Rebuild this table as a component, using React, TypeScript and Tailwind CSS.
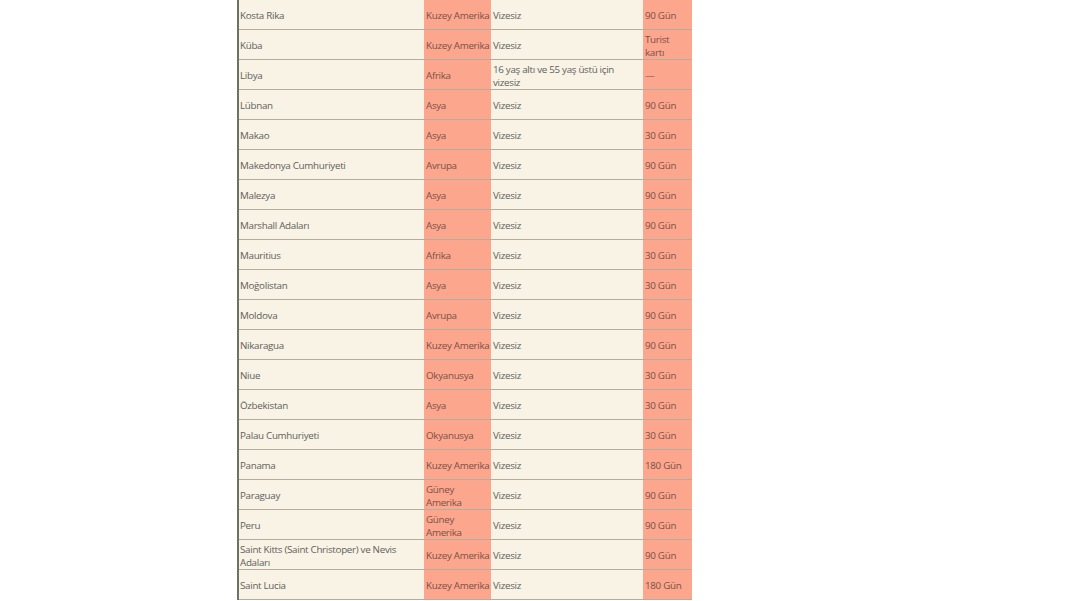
import React from "react";

type Row = [string, string, string, string];

const rows: Row[] = [
  ["Kosta Rika", "Kuzey Amerika", "Vizesiz", "90 Gün"],
  ["Küba", "Kuzey Amerika", "Vizesiz", "Turist kartı"],
  ["Libya", "Afrika", "16 yaş altı ve 55 yaş üstü için vizesiz", "—"],
  ["Lübnan", "Asya", "Vizesiz", "90 Gün"],
  ["Makao", "Asya", "Vizesiz", "30 Gün"],
  ["Makedonya Cumhuriyeti", "Avrupa", "Vizesiz", "90 Gün"],
  ["Malezya", "Asya", "Vizesiz", "90 Gün"],
  ["Marshall Adaları", "Asya", "Vizesiz", "90 Gün"],
  ["Mauritius", "Afrika", "Vizesiz", "30 Gün"],
  ["Moğolistan", "Asya", "Vizesiz", "30 Gün"],
  ["Moldova", "Avrupa", "Vizesiz", "90 Gün"],
  ["Nikaragua", "Kuzey Amerika", "Vizesiz", "90 Gün"],
  ["Niue", "Okyanusya", "Vizesiz", "30 Gün"],
  ["Özbekistan", "Asya", "Vizesiz", "30 Gün"],
  ["Palau Cumhuriyeti", "Okyanusya", "Vizesiz", "30 Gün"],
  ["Panama", "Kuzey Amerika", "Vizesiz", "180 Gün"],
  ["Paraguay", "Güney\nAmerika", "Vizesiz", "90 Gün"],
  ["Peru", "Güney\nAmerika", "Vizesiz", "90 Gün"],
  ["Saint Kitts (Saint Christoper) ve Nevis Adaları", "Kuzey Amerika", "Vizesiz", "90 Gün"],
  ["Saint Lucia", "Kuzey Amerika", "Vizesiz", "180 Gün"],
];

export default function App() {
  return (
    <div
      className="w-[1068px] h-[601px] overflow-hidden bg-white"
      style={{ fontFamily: '"Open Sans", "Noto Sans", sans-serif' }}
    >
      <div className="ml-[237px] w-[455px] border-l-2 border-[#6e7266] text-[9.8px] leading-[13px] tracking-[-0.3px] text-[#606060]">
        {rows.map((r, i) => (
          <div key={i} className="flex h-[30px] border-b border-[#b2ad9e]">
            <div className="w-[185px] bg-[#f8f3e4] pl-[1px] pr-1 pt-[2px] flex items-center">{r[0]}</div>
            <div className="w-[67px] bg-[#fca78d] pl-[2px] pt-[2px] flex items-center whitespace-pre text-[#7a5048]">{r[1]}</div>
            <div className="w-[152px] bg-[#f8f3e4] pl-[2px] pr-4 pt-[2px] flex items-center">{r[2]}</div>
            <div className="w-[49px] bg-[#fca78d] pl-[2px] pr-[6px] pt-[2px] flex items-center text-[#7a5048]">{r[3]}</div>
          </div>
        ))}
      </div>
    </div>
  );
}
